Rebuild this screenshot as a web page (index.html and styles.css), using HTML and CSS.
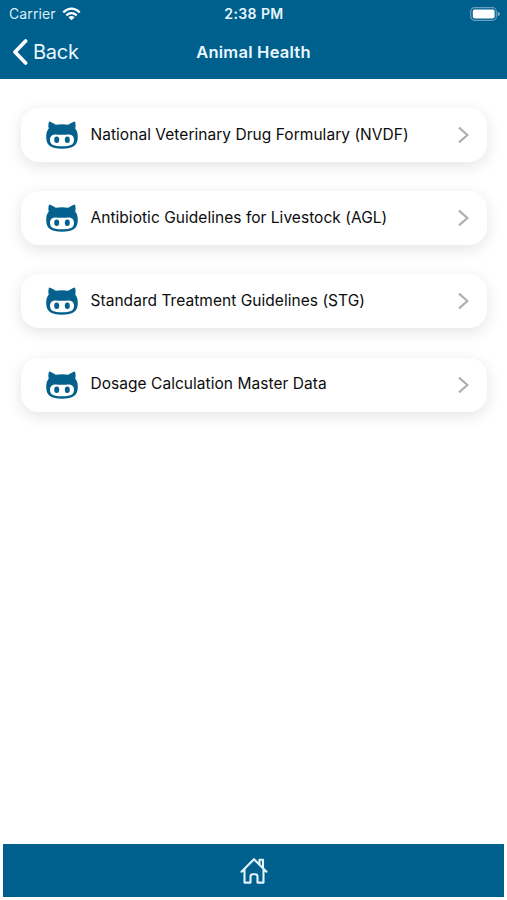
FILE: index.html
```html
<!DOCTYPE html>
<html lang="en">
<head>
<meta charset="utf-8">
<title>Animal Health</title>
<link rel="stylesheet" href="styles.css">
</head>
<body>
<svg width="0" height="0" class="defs" aria-hidden="true">
  <symbol id="cat" viewBox="0 0 32 28">
    <path fill="currentColor" fill-rule="evenodd" d="M3 .4C5.500 1 8 2.400 9.600 3.700Q16 2.900 22.400 3.700C24 2.400 26.500 1 29 .4C29.800 3.500 29.800 5.500 29.200 7.400C31 9.500 31.800 12 31.800 16C31.800 24.500 27 27.700 16 27.700S.2 24.500.2 16C.2 12 1 9.500 2.800 7.400C2.200 5.500 2.200 3.500 3 .4ZM9.500 13.400C5.800 13.400 4 15.600 4 18.700C4 24 8 25.200 16 25.200S28 24 28 18.700C28 15.600 26.200 13.400 22.500 13.400Q16 14.200 9.500 13.400Z"/>
    <ellipse fill="currentColor" cx="10.700" cy="18.800" rx="2.500" ry="3.200"/>
    <ellipse fill="currentColor" cx="21.300" cy="18.800" rx="2.500" ry="3.200"/>
  </symbol>
  <symbol id="chevron" viewBox="0 0 12 18">
    <path d="M2 1.600 10.400 9 2 16.400" fill="none" stroke="currentColor" stroke-width="2.300"/>
  </symbol>
</svg>
<div class="screen">
  <header class="header">
    <div class="status">
      <div class="carrier"><span>Carrier</span>
        <svg class="wifi" viewBox="0 0 20 14"><g fill="none" stroke="currentColor" stroke-width="2.400"><path d="M1.300 5.200Q10-2.400 18.700 5.200"/><path d="M4.500 8.400Q10 3.800 15.500 8.400"/></g><path fill="currentColor" d="M6.700 10.400Q10 7.900 13.300 10.400L10 13.700Z"/></svg>
      </div>
      <span class="time">2:38 PM</span>
      <svg class="battery" viewBox="0 0 31 14"><rect x=".7" y=".7" width="25.600" height="12.600" rx="3.800" fill="none" stroke="#6a9fc0" stroke-width="1.200"/><rect x="2.800" y="2.600" width="21.800" height="8.800" rx="1.800" fill="#fff"/><path d="M27.600 4.700Q30 5.600 30 7T27.600 9.300Z" fill="#7faecb"/></svg>
    </div>
    <div class="nav">
      <div class="back"><svg viewBox="0 0 16 26"><path d="M13.600 2 3 13 13.600 24" fill="none" stroke="currentColor" stroke-width="3.700" stroke-linecap="round" stroke-linejoin="round"/></svg><span>Back</span></div>
      <h1 class="title">Animal Health</h1>
      <div></div>
    </div>
  </header>
  <main class="list">
    <div class="card"><svg class="cat"><use href="#cat"/></svg><span class="label">National Veterinary Drug Formulary (NVDF)</span><svg class="chevron"><use href="#chevron"/></svg></div>
    <div class="card"><svg class="cat"><use href="#cat"/></svg><span class="label">Antibiotic Guidelines for Livestock (AGL)</span><svg class="chevron"><use href="#chevron"/></svg></div>
    <div class="card"><svg class="cat"><use href="#cat"/></svg><span class="label">Standard Treatment Guidelines (STG)</span><svg class="chevron"><use href="#chevron"/></svg></div>
    <div class="card"><svg class="cat"><use href="#cat"/></svg><span class="label">Dosage Calculation Master Data</span><svg class="chevron"><use href="#chevron"/></svg></div>
  </main>
  <footer class="tabbar">
    <svg class="home" viewBox="0 0 28 28" fill="none" stroke="currentColor" stroke-width="2.100" stroke-linejoin="round" stroke-linecap="round"><path d="M1.500 14.700 14 2.200 26.500 14.700M19.500 7.200V2.800H23V11M4.500 12.300V25.600H10.500V19.600Q10.500 17.300 12.800 17.300H15.200Q17.500 17.300 17.500 19.600V25.600H23.500V12.300"/></svg>
  </footer>
</div>
</body>
</html>
```
FILE: styles.css
```css
* { box-sizing: border-box; }
body {
  margin: 0;
  background: #fff;
  color: #0c0c0c;
  font-family: Inter, "Liberation Sans", sans-serif;
}
svg { display: block; flex: none; }
.defs { position: absolute; }
.screen {
  width: 507px;
  height: 900px;
  display: flex;
  flex-direction: column;
  overflow: hidden;
}
.header {
  height: 79px;
  flex: none;
  background: #00608d;
  color: #fff;
}
.status, .nav {
  display: grid;
  grid-template-columns: 1fr auto 1fr;
  align-items: center;
}
.status { height: 27px; padding: 0 6px 0 9px; }
.carrier { display: flex; align-items: center; gap: 6px; font-size: 14px; color: #d9edf7; letter-spacing: 0.1px; }
.wifi { width: 19px; height: 14px; color: #fff; }
.time { margin-right: 2px; font-size: 14px; font-weight: 600; color: #e6f5fc; letter-spacing: 0.4px; }
.battery { width: 31px; height: 14px; justify-self: end; }
.nav { height: 50px; padding: 0 12px; }
.back { display: flex; align-items: center; gap: 5px; font-size: 20px; letter-spacing: -0.25px; color: #e9f8ff; }
.back svg { width: 16px; height: 26px; color: #fff; }
.title { margin: 0; font-size: 16.500px; font-weight: 600; letter-spacing: 0.25px; color: #e9f8ff; }
.list {
  flex: 1;
  display: flex;
  flex-direction: column;
  gap: 29.200px;
  padding: 29px 20px 0 21px;
}
.card {
  height: 54px;
  display: flex;
  align-items: center;
  padding: 0 18px 0 24.500px;
  border-radius: 18px;
  background: #fff;
  box-shadow: 0 4px 16px rgba(0, 0, 0, 0.11);
}
.cat { width: 32px; height: 28px; margin-right: 13px; color: #04608c; }
.label { flex: 1; padding-bottom: 2px; font-size: 15.500px; white-space: nowrap; letter-spacing: 0.04px; }
.chevron { width: 12px; height: 18px; color: #b0b0b0; }
.tabbar {
  height: 53px;
  flex: none;
  margin: 0 3px 3px;
  display: flex;
  align-items: center;
  justify-content: center;
  background: #00608d;
  color: #e2f4ff;
}
.home { width: 28px; height: 28px; }
```
